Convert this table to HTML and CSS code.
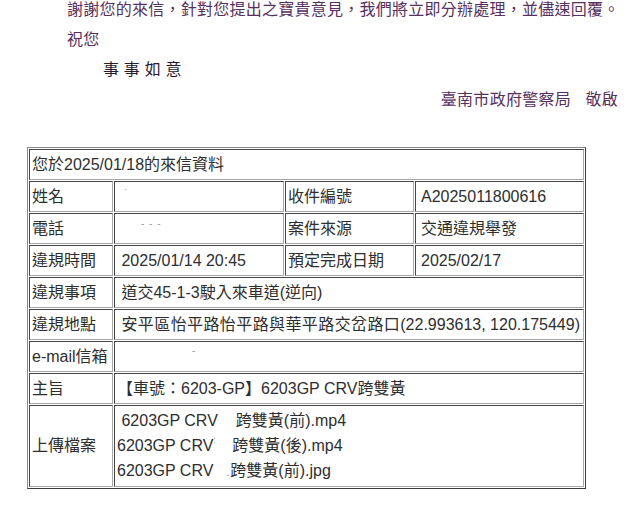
FILE: index.html
```html
<!DOCTYPE html>
<html lang="zh-Hant">
<head>
<meta charset="utf-8">
<title>來信資料</title>
<link rel="stylesheet" href="styles.css">
</head>
<body>
<div class="letter">
  <p class="line">謝謝您的來信，針對您提出之寶貴意見，我們將立即分辦處理，並儘速回覆。</p>
  <p class="line">祝您</p>
  <p class="line wish">事 事 如 意</p>
  <p class="line sign">臺南市政府警察局&nbsp;&nbsp;&nbsp;敬啟</p>
</div>
<table class="info">
  <colgroup>
    <col class="c1"><col class="c2"><col class="c3"><col class="c4">
  </colgroup>
  <tr class="row"><td colspan="4">您於2025/01/18的來信資料</td></tr>
  <tr class="row">
    <td>姓名</td>
    <td class="val"><span class="mark dot">·</span></td>
    <td>收件編號</td>
    <td class="val4">A2025011800616</td>
  </tr>
  <tr class="row">
    <td>電話</td>
    <td class="val"><span class="mark dashes">- - -</span></td>
    <td>案件來源</td>
    <td class="val4 cjk">交通違規舉發</td>
  </tr>
  <tr class="row">
    <td>違規時間</td>
    <td class="val">&nbsp;2025/01/14 20:45</td>
    <td>預定完成日期</td>
    <td class="val4">2025/02/17</td>
  </tr>
  <tr class="row">
    <td>違規事項</td>
    <td class="val" colspan="3">&nbsp;道交45-1-3駛入來車道(逆向)</td>
  </tr>
  <tr class="row">
    <td>違規地點</td>
    <td class="val" colspan="3">&nbsp;<span class="wide">安平區怡平路怡平路與華平路交岔路口</span>(22.993613, 120.175449)</td>
  </tr>
  <tr class="row">
    <td>e-mail信箱</td>
    <td class="val" colspan="3"><span class="mark email">-</span></td>
  </tr>
  <tr class="row">
    <td>主旨</td>
    <td class="val" colspan="3">【車號：6203-GP】6203GP CRV跨雙黃</td>
  </tr>
  <tr class="files">
    <td>上傳檔案</td>
    <td class="val" colspan="3">
      <div class="file">&nbsp;6203GP CRV<span class="gap g1"></span>跨雙黃(前).mp4</div>
      <div class="file">6203GP CRV<span class="tick">:</span><span class="gap g2"></span>跨雙黃(後).mp4</div>
      <div class="file">6203GP CRV<span class="gap g3"></span><span class="tiny">.</span>跨雙黃(前).jpg</div>
    </td>
  </tr>
</table>
</body>
</html>
```

FILE: styles.css
```css
html, body {
  margin: 0;
  padding: 0;
  background: #ffffff;
}

body {
  font-family: "Liberation Sans", "Noto Sans CJK TC", Arial, sans-serif;
  font-size: 16px;
  color: #2e2e2e;
}

.letter {
  margin-top: -5px;
  padding-left: 67px;
  width: 559px;
  color: #56305f;
}

.line {
  margin: 0;
  height: 30px;
  line-height: 30px;
  font-size: 16px;
  letter-spacing: 0.25px;
  white-space: nowrap;
}

.wish {
  padding-left: 36px;
  color: #2a1a30;
  letter-spacing: 0.2px;
}

.sign {
  text-align: right;
  padding-right: 8px;
  letter-spacing: 0.3px;
}

.info {
  margin: 32px 0 0 27px;
  width: 559px;
  table-layout: fixed;
  border-collapse: separate;
  border-spacing: 1px;
  border-style: solid;
  border-width: 1px;
  border-color: #8a8a8a #3a3a3a #3a3a3a #8a8a8a;
}

.c1 { width: 84px; }
.c2 { width: 170px; }
.c3 { width: 129px; }
.c4 { width: 169px; }

.info td {
  box-sizing: border-box;
  border-style: solid;
  border-width: 1px;
  border-color: #474747 #a8a8a8 #a8a8a8 #474747;
  padding: 0 2px;
  line-height: 20px;
  vertical-align: middle;
  white-space: nowrap;
  overflow: hidden;
}

.row td {
  height: 31px;
}

.files td {
  height: 82px;
}

.val4 {
  padding-left: 5px !important;
}

.wide {
  letter-spacing: 0.4px;
}

.mark {
  position: relative;
  color: #9a9a9a;
  font-size: 10px;
}

.dot {
  left: 7px;
  top: -8px;
}

.dashes {
  left: 24px;
  top: -6px;
  letter-spacing: 1px;
}

.email {
  left: 75px;
  top: -7px;
}

.file {
  line-height: 25px;
}

.gap {
  display: inline-block;
}

.g1 { width: 18px; }
.g2 { width: 15px; }
.g3 { width: 13px; }

.tick {
  display: inline-block;
  width: 4px;
  font-size: 9px;
  color: #a0a0a0;
  vertical-align: top;
  line-height: 14px;
}

.tiny {
  display: inline-block;
  width: 4px;
  font-size: 12px;
  color: #888;
}
```
